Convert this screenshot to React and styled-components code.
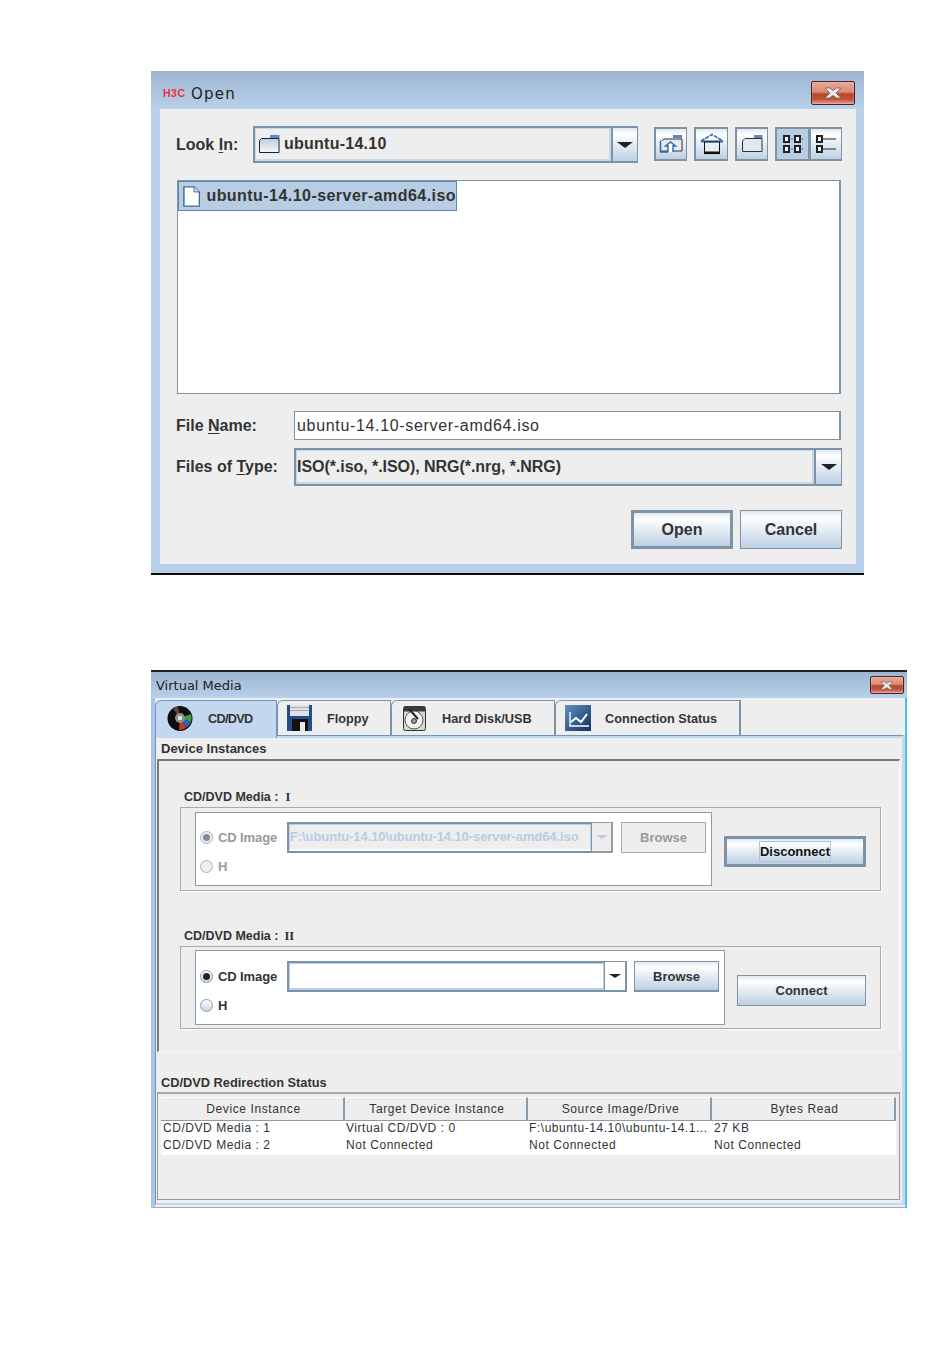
import React from "react";
import styled, { createGlobalStyle, css } from "styled-components";

const Global = createGlobalStyle`
  html, body { margin: 0; padding: 0; background: #fff; }
  * { box-sizing: border-box; }
  #root { font-family: "Liberation Sans", Arial, sans-serif; color: #333; }
`;

const metal = "linear-gradient(180deg,#dfe9f2 0,#ffffff 18%,#eef3f8 38%,#bdd0e4 100%)";

const Page = styled.div`
  width: 950px; height: 1346px; padding: 71px 0 0 151px; overflow: hidden;
`;

/* ---------- Open dialog ---------- */
const Dialog = styled.div`
  width: 713px; height: 504px; display: flex; flex-direction: column;
  background: #b8d0ea; border-bottom: 2px solid #0b0b0b;
`;
const DialogTitle = styled.div`
  height: 38px; flex: none; display: flex; align-items: center; padding: 6px 9px 0 12px;
  background: linear-gradient(180deg,#9db5d0,#b8d0ea);
`;
const Logo = styled.span`
  font: bold 10px/10px "Liberation Sans", sans-serif; color: #e8303c; letter-spacing: .5px; width: 28px;
  padding-top: 2px; transform: scaleX(1.05); transform-origin: left;
`;
const TitleText = styled.span`
  font: ${p => p.$size}px "DejaVu Sans", sans-serif; color: #222; letter-spacing: ${p => p.$track}px; flex: 1;
  padding-top: ${p => p.$pt || 0}px;
`;
const CloseBox = styled.div`
  width: ${p => p.$w}px; height: ${p => p.$h}px; display: flex; align-items: center; justify-content: center;
  border: 1px solid #4a1f28; border-radius: 2px;
  background: linear-gradient(180deg,#e8a898 0,#dd8c76 45%,#b8452a 55%,#c4553a 80%,#e2a595 100%);
  box-shadow: inset 0 0 0 1px rgba(255,255,255,.15);
`;
const DialogBody = styled.div`
  margin: 0 8px 9px 9px; flex: 1; background: #eee; padding: 17px 0 0 16px;
`;
const Row = styled.div`
  display: flex; align-items: center; height: ${p => p.$h}px; margin-top: ${p => p.$mt || 0}px;
`;
const BigLabel = styled.div`
  width: ${p => p.$w}px; flex: none; font: bold 16px "Liberation Sans", sans-serif; color: #333;
  u { text-underline-offset: 2px; }
`;
const Combo = styled.div`
  width: ${p => p.$w}px; height: 100%; display: flex; flex: none;
  border: 1px solid #7f93a7; border-top-width: 2px; border-bottom-width: 2px; border-left-width: 2px;
`;
const ComboValue = styled.div`
  flex: 1; display: flex; align-items: center; gap: 4px; padding-left: ${p => p.$pl}px;
  background: #eee; border: 1px solid #c6d8ea; border-width: 1px 2px 2px 1px;
  font: bold 16px "Liberation Sans", sans-serif; letter-spacing: ${p => p.$track}px; color: #333; white-space: nowrap;
`;
const ArrowBox = styled.div`
  width: ${p => p.$w}px; flex: none; display: flex; align-items: center; justify-content: center;
  border-left: 2px solid #7f93a7; background: ${metal};
`;
const Tri = styled.i`
  width: 0; height: 0; border-style: solid; border-width: ${p => p.$s || 6}px ${p => (p.$s || 6) + 2}px 0;
  border-color: ${p => p.$c || "#222"} transparent transparent;
`;
const Tools = styled.div`
  display: flex; margin: 0 0 2px 16px; height: 34px;
`;
const ToolBtn = styled.div`
  width: ${p => p.$w || 33}px; height: 34px; margin-left: ${p => p.$ml || 0}px; flex: none;
  display: flex; align-items: center; justify-content: center;
  border: 1px solid #7f93a7; border-width: 2px 1px 2px 2px;
  background: ${p => (p.$on ? "#b8cde3" : metal)};
`;
const FileList = styled.div`
  margin: 17px 0 0 1px; width: 664px; height: 214px; background: #fff;
  border: 1px solid #7f93a7; border-right-width: 2px;
`;
const Selected = styled.div`
  width: 279px; height: 30px; display: flex; align-items: center; gap: 6px; padding-left: 4px;
  background: #b8cde3; border: 1px solid #5f87b5;
  font: bold 16px "Liberation Sans", sans-serif; letter-spacing: .45px; color: #333; white-space: nowrap;
`;
const FileField = styled.div`
  width: 547px; height: 29px; background: #fff; display: flex; align-items: center; padding-left: 2px;
  border: 1px solid #7f93a7; border-width: 1px 2px 1px 1px;
  font: 16px "Liberation Sans", sans-serif; letter-spacing: .67px; color: #333; white-space: nowrap;
`;
const Actions = styled.div`
  display: flex; gap: 7px; justify-content: flex-end; width: 666px; margin-top: 24px;
`;
const ActionBtn = styled.div`
  width: 102px; height: 39px; display: flex; align-items: center; justify-content: center;
  font: bold 16px "Liberation Sans", sans-serif; color: #333; background: ${metal};
  border: ${p => (p.$def ? 3 : 1)}px solid #7f93a7;
`;

/* ---------- Virtual media window ---------- */
const VMWindow = styled.div`
  width: 756px; height: 538px; margin-top: 95px; display: flex; flex-direction: column;
  border-top: 2px solid #222;
`;
const VMTitle = styled.div`
  height: 26px; flex: none; display: flex; align-items: center; padding: 0 3px 0 5px;
  background: linear-gradient(180deg,#9db5d0,#b8d0ea);
`;
const VMBody = styled.div`
  flex: 1; display: flex; flex-direction: column; background: #eee; min-height: 0;
  border-left: 4px solid #a9c6ea; border-right: 2px solid #46c0ee; border-bottom: 1px solid #aaa;
`;
const TabStrip = styled.div`
  display: flex; height: 35px; margin-top: 2px; flex: none;
`;
const Tab = styled.div`
  width: ${p => p.$w}px; height: ${p => (p.$on ? 38 : 35)}px; flex: none; display: flex; align-items: center;
  position: relative; z-index: ${p => (p.$on ? 2 : 1)};
  padding-left: ${p => p.$pl}px; padding-bottom: ${p => (p.$on ? 3 : 0)}px;
  gap: ${p => p.$gap}px;
  background: ${p => (p.$on ? "#c3d8f0" : "#eee")};
  border: 1px solid #7f93a7; border-width: 1px 1px 0 1px; border-top-left-radius: 6px;
  border-right-width: ${p => (p.$last ? 2 : 1)}px;
  ${p => p.$on && css`border-color: #6f94c0;`}
  font: bold 12.7px "Liberation Sans", sans-serif; color: #333; white-space: nowrap;
`;
const TabName = styled.span`
  letter-spacing: ${p => p.$track || 0}px; padding-top: 2px;
`;
const Panel = styled.div`
  flex: 1; min-height: 0; margin-bottom: 2px; display: flex; flex-direction: column;
  border: 1px solid #6f94c0; border-width: 1px 3px 0 1px; border-right-color: #c9d9ec;
  border-bottom: 2px solid #c3d8f0;
  border-top: 1px solid #6f94c0; box-shadow: inset 0 2px 0 #c3d8f0;
`;
const Heading = styled.div`
  height: ${p => p.$h}px; flex: none; display: flex; align-items: flex-end; padding: 0 0 ${p => p.$pb}px 5px;
  font: bold ${p => p.$size}px "Liberation Sans", sans-serif; color: #333; white-space: nowrap;
`;
const Group = styled.div`
  margin-left: 1px; width: 743px; height: 293px; flex: none; padding: 28px 0 0 21px;
  border-top: 2px solid #777; border-left: 2px solid #777; border-right: 1px solid #fff; border-bottom: 1px solid #f6f6f6;
`;
const SectionTitle = styled.div`
  height: 16px; margin: ${p => p.$mt || 0}px 0 2px 4px; display: flex; align-items: center; gap: 6px;
  font: bold 12.5px "Liberation Sans", sans-serif; color: #333; white-space: nowrap;
`;
const Roman = styled.span`
  font: bold 12.5px "Liberation Serif", serif; margin-left: ${p => p.$ml}px;
`;
const Outer = styled.div`
  width: 701px; height: ${p => p.$h}px; display: flex; align-items: flex-start; padding: ${p => p.$pt}px 0 0 14px;
  border: 1px solid #aaa; box-shadow: 1px 1px 0 #fff;
`;
const Inner = styled.div`
  width: ${p => p.$w}px; height: ${p => p.$h}px; background: #fff; flex: none; padding: ${p => p.$pt}px 0 0 4px;
  border: 1px solid #8a9bac;
`;
const RadioRow = styled.div`
  display: flex; align-items: center; height: ${p => p.$h}px; margin-top: ${p => p.$mt || 0}px;
`;
const Radio = styled.span`
  width: 13px; height: 13px; border-radius: 50%; flex: none; display: flex; align-items: center; justify-content: center;
  border: 1px solid ${p => (p.$off ? "#aab2ba" : "#8a9bb0")};
  background: ${p => (p.$off ? "#eee" : "linear-gradient(180deg,#fff,#c6d6e8)")};
  &::after {
    content: ""; width: 7px; height: 7px; border-radius: 50%;
    background: ${p => (!p.$sel ? "transparent" : p.$off ? "#7a8ca5" : "#222")};
  }
`;
const RadioLabel = styled.span`
  width: ${p => p.$w}px; flex: none; padding-left: 5px; letter-spacing: -.1px;
  font: bold 13px "Liberation Sans", sans-serif; color: ${p => (p.$off ? "#999" : "#333")}; white-space: nowrap;
`;
const MiniCombo = styled.div`
  width: ${p => p.$w}px; height: 31px; flex: none; display: flex;
  border: 2px solid #7f93a7; border-right-width: 1px; border-bottom-width: 2px;
  background: ${p => (p.$off ? "#eee" : "#fff")};
`;
const MiniValue = styled.div`
  flex: 1; min-width: 0; display: flex; align-items: center; padding: 0 0 1px 0; overflow: hidden;
  border: 1px solid #b8d0ea; border-width: 1px 1px 2px 1px; border-bottom-color: ${p => (p.$off ? "#fff" : "#b8d0ea")};
  font: bold 13px "Liberation Sans", sans-serif; letter-spacing: -.09px; color: #b8cde3; white-space: nowrap;
`;
const MiniArrow = styled.div`
  width: ${p => p.$w}px; height: 31px; flex: none; display: flex; align-items: center; justify-content: center;
  border: 2px solid #7f93a7; border-width: 1px 2px 2px 0; background: ${p => (p.$off ? "#eee" : "#fff")};
  ${p => p.$off && "border-color:#999;"}
`;
const SmallBtn = styled.div`
  width: ${p => p.$w}px; height: 31px; margin-left: ${p => p.$ml}px; flex: none; display: flex; align-items: center; justify-content: center;
  font: bold 13px "Liberation Sans", sans-serif; color: ${p => (p.$off ? "#999" : "#333")};
  border: 1px solid ${p => (p.$off ? "#aaa" : "#7f93a7")};
  border-bottom-width: ${p => (p.$off ? 1 : 2)}px;
  background: ${p => (p.$off ? "#eee" : metal)};
`;
const SideBtn = styled.div`
  width: ${p => p.$w}px; height: 31px; margin: ${p => p.$mt}px 0 0 12px; flex: none; display: flex; align-items: center; justify-content: center;
  font: bold 13px "Liberation Sans", sans-serif; color: ${p => (p.$focus ? "#111" : "#333")};
  border: ${p => (p.$focus ? 3 : 1)}px solid #7f93a7; background: ${metal};
`;
const Focus = styled.span`
  display: inline-flex; align-items: center; height: 21px; border: 1px solid #b3c4d6;
`;
const TableBox = styled.div`
  margin-left: 1px; width: 743px; height: 108px; flex: none; padding: 3px 0 0 3px;
  border: 1px solid #999; border-top: 2px solid #aaa;
`;
const Cols = styled.div`
  display: grid; grid-template-columns: 184px 183px 184px 184px; width: 735px;
`;
const HeadCell = styled.div`
  height: 24px; display: flex; align-items: center; justify-content: center; padding: 0 0 1px 3px;
  font: 12px "Liberation Sans", sans-serif; letter-spacing: ${p => p.$track}px; color: #333;
  background: #eee; border-top: 1px solid #fff; border-bottom: 1px solid #8a9bac; border-right: 2px solid #8a9bac;
`;
const Rows = styled(Cols)`
  grid-template-columns: 183px 183px 185px 184px; background: #fff; grid-auto-rows: 17px;
`;
const Cell = styled.div`
  padding-left: 2px; font: 12px/15px "Liberation Sans", sans-serif;
  letter-spacing: .55px; color: #333; white-space: nowrap; overflow: hidden;
`;
const TabIcon = styled.svg`
  flex: none; display: block;
`;

/* ---------- icons ---------- */
const CloseX = ({ s = 1 }) => (
  <svg width={18 * s} height={12 * s} viewBox="0 0 18 12">
    <path d="M1 1h4.500L9 3.500 12.500 1H17l-5 5 5 5h-4.500L9 8.500 5.500 11H1l5-5z" fill="#ececec" stroke="#6a5a58" strokeWidth=".8" />
  </svg>
);
const FolderIcon = () => (
  <svg width="22" height="20" viewBox="0 0 22 20">
    <defs><linearGradient id="fg" x1="0" y1="0" x2="0" y2="1"><stop offset="0" stopColor="#b8cde3" /><stop offset="1" stopColor="#f6f9fb" /></linearGradient></defs>
    <rect x="12" y="1" width="9.500" height="3" fill="#5f87c0" />
    <path d="M1.500 6.500 L3.500 4.500 H21 V18.500 H1.500Z" fill="url(#fg)" stroke="#222" />
  </svg>
);
const DocIcon = () => (
  <svg width="19" height="23" viewBox="0 0 19 23">
    <path d="M1 1H12L18 7V22H1Z" fill="#fff" stroke="#3e6b9c" strokeWidth="1.6" />
    <path d="M12 1V6.500H18" fill="#cfdcea" stroke="#3e6b9c" />
  </svg>
);
const UpIcon = () => (
  <svg width="24" height="20" viewBox="0 0 24 20">
    <rect x="14" y="1" width="9" height="3" fill="#5f87c0" />
    <path d="M3 7 L5 5 H23 V17 H1.500" fill="#e4ebf2" stroke="#333" />
    <path d="M1.500 6.500V18H9" fill="none" stroke="#2f66a8" strokeWidth="1.500" />
    <path d="M9 18V12H6.500L11.500 8 16.500 12H14V18" fill="#fff" stroke="#2f66a8" strokeWidth="1.400" />
  </svg>
);
const HomeIcon = () => (
  <svg width="24" height="22" viewBox="0 0 24 22">
    <path d="M1 8 12 1.500 23 8" fill="none" stroke="#2f66a8" strokeWidth="1.600" strokeDasharray="4 1" />
    <rect x="1" y="7.500" width="22" height="2" fill="#2f66a8" />
    <rect x="4.500" y="9" width="15" height="11" fill="#e8eef4" stroke="#111" strokeWidth="1" />
    <rect x="4" y="18.500" width="16" height="2.600" fill="#111" />
  </svg>
);
const NewFolderIcon = () => (
  <svg width="22" height="20" viewBox="0 0 22 20">
    <rect x="13" y="1" width="8.500" height="3" fill="#5f87c0" />
    <path d="M1.500 7 L4 4.500 H21 V17.500 H1.500Z" fill="#e0e7ef" stroke="#333" />
  </svg>
);
const GridIcon = () => (
  <svg width="22" height="20" viewBox="0 0 22 20" fill="#f4f6f8" stroke="#222" strokeWidth="2">
    <rect x="2" y="2" width="5" height="6" /><rect x="13" y="2" width="5" height="6" />
    <rect x="2" y="12" width="5" height="6" /><rect x="13" y="12" width="5" height="6" />
    <path d="M9.500 5h1M20 5h1M9.500 15h1M20 15h1" strokeWidth="1" />
  </svg>
);
const DetailIcon = () => (
  <svg width="22" height="20" viewBox="0 0 22 20" fill="#f4f6f8" stroke="#222" strokeWidth="2">
    <rect x="2" y="2" width="5" height="6" /><rect x="2" y="12" width="5" height="6" />
    <path d="M8 5h13M8 15h13" strokeWidth="1" />
  </svg>
);
const DiscIcon = () => (
  <TabIcon width="26" height="26" viewBox="0 0 26 26">
    <circle cx="13" cy="13.500" r="12.500" fill="#0e0e0e" />
    <path d="M13 13 L24 9 A12 12 0 0 1 24 17Z" fill="#3f9a4a" />
    <path d="M13 13 L24 17 A12 12 0 0 1 19 23Z" fill="#3a5fb0" />
    <path d="M13 13 L19 23 A12 12 0 0 1 12 25Z" fill="#b8402a" />
    <path d="M13 13 L11 1.500 A12 12 0 0 0 6 3.500Z" fill="#5a4a30" />
    <circle cx="13" cy="13" r="5" fill="#8f8f8a" />
    <circle cx="13" cy="13" r="2.200" fill="#e6e6e0" />
  </TabIcon>
);
const FloppyIcon = () => (
  <TabIcon width="25" height="26" viewBox="0 0 25 26">
    <rect width="25" height="26" fill="#234f86" />
    <rect x="3" y="0" width="19" height="11" fill="#dfe3e8" />
    <rect x="3" y="2" width="19" height="1" fill="#aab" />
    <rect x="3" y="5" width="19" height="1" fill="#aab" />
    <rect x="5" y="14" width="16" height="12" fill="#111" />
    <rect x="13" y="17" width="5" height="9" fill="#e8e8e8" />
  </TabIcon>
);
const HddIcon = () => (
  <TabIcon width="23" height="26" viewBox="0 0 23 26">
    <rect x=".5" y="1.500" width="22" height="24" rx="2" fill="#d8d8d4" stroke="#333" />
    <path d="M1 1.500h21v5H1z" fill="#3a3a38" />
    <circle cx="11" cy="15" r="9" fill="#f2f2ee" stroke="#555" />
    <circle cx="11" cy="16" r="2.500" fill="#999" stroke="#333" />
    <path d="M6 4 15 14" stroke="#222" strokeWidth="2" />
  </TabIcon>
);
const ChartIcon = () => (
  <TabIcon width="26" height="26" viewBox="0 0 26 26">
    <defs><linearGradient id="cg" x1="0" y1="0" x2="1" y2="1"><stop offset="0" stopColor="#5f93c6" /><stop offset="1" stopColor="#10305a" /></linearGradient></defs>
    <rect width="26" height="26" fill="url(#cg)" />
    <path d="M5 7V21H24" fill="none" stroke="#fff" strokeWidth="1.400" />
    <path d="M6 17 11 13 16 17 22 9" fill="none" stroke="#fff" strokeWidth="2" />
  </TabIcon>
);

const Media = ({ title, roman, gap, mt, outerH, outerPt, innerW, innerH, innerPt, off, comboW, arrowW, btnMl, sideW, sideMt, side, focus }) => (
  <>
    <SectionTitle $mt={mt}>{title}<Roman $ml={gap}>{roman}</Roman></SectionTitle>
    <Outer $h={outerH} $pt={outerPt}>
      <Inner $w={innerW} $h={innerH} $pt={innerPt}>
        <RadioRow $h={31}>
          <Radio $sel $off={off} />
          <RadioLabel $w={74} $off={off}>CD Image</RadioLabel>
          <MiniCombo $w={comboW} $off={off}>
            <MiniValue $off={off}>{off ? "F:\\ubuntu-14.10\\ubuntu-14.10-server-amd64.iso" : ""}</MiniValue>
          </MiniCombo>
          <MiniArrow $w={arrowW} $off={off}><Tri $s={4} $c={off ? "#b8cde3" : "#222"} /></MiniArrow>
          <SmallBtn $w={85} $ml={btnMl} $off={off}>Browse</SmallBtn>
        </RadioRow>
        <RadioRow $h={16} $mt={5}>
          <Radio $off={off} />
          <RadioLabel $w={30} $off={off}>H</RadioLabel>
        </RadioRow>
      </Inner>
      <SideBtn $w={sideW} $mt={sideMt} $focus={focus}>{focus ? <Focus>{side}</Focus> : side}</SideBtn>
    </Outer>
  </>
);

export default function App() {
  return (
    <Page>
      <Global />
      <Dialog>
        <DialogTitle>
          <Logo>H3C</Logo>
          <TitleText $size={15} $track={1.2} $pt={2}>Open</TitleText>
          <CloseBox $w={44} $h={24}><CloseX /></CloseBox>
        </DialogTitle>
        <DialogBody>
          <Row $h={37}>
            <BigLabel $w={77}>Look <u>I</u>n:</BigLabel>
            <Combo $w={385}>
              <ComboValue $pl={2} $track={.25}><FolderIcon />ubuntu-14.10</ComboValue>
              <ArrowBox $w={26}><Tri /></ArrowBox>
            </Combo>
            <Tools>
              <ToolBtn><UpIcon /></ToolBtn>
              <ToolBtn $w={34} $ml={7}><HomeIcon /></ToolBtn>
              <ToolBtn $ml={7}><NewFolderIcon /></ToolBtn>
              <ToolBtn $w={34} $ml={7} $on><GridIcon /></ToolBtn>
              <ToolBtn $w={33}><DetailIcon /></ToolBtn>
            </Tools>
          </Row>
          <FileList>
            <Selected><DocIcon />ubuntu-14.10-server-amd64.iso</Selected>
          </FileList>
          <Row $h={29} $mt={17}>
            <BigLabel $w={118}>File <u>N</u>ame:</BigLabel>
            <FileField>ubuntu-14.10-server-amd64.iso</FileField>
          </Row>
          <Row $h={38} $mt={8}>
            <BigLabel $w={118}>Files of <u>T</u>ype:</BigLabel>
            <Combo $w={548}>
              <ComboValue $pl={0} $track={-.05}>ISO(*.iso, *.ISO), NRG(*.nrg, *.NRG)</ComboValue>
              <ArrowBox $w={27}><Tri /></ArrowBox>
            </Combo>
          </Row>
          <Actions>
            <ActionBtn $def>Open</ActionBtn>
            <ActionBtn>Cancel</ActionBtn>
          </Actions>
        </DialogBody>
      </Dialog>

      <VMWindow>
        <VMTitle>
          <TitleText $size={13} $track={0}>Virtual Media</TitleText>
          <CloseBox $w={34} $h={18}><CloseX s={0.75} /></CloseBox>
        </VMTitle>
        <VMBody>
          <TabStrip>
            <Tab $w={122} $pl={11} $gap={15} $on><DiscIcon /><TabName $track={-.7}>CD/DVD</TabName></Tab>
            <Tab $w={114} $pl={9} $gap={15}><FloppyIcon /><TabName>Floppy</TabName></Tab>
            <Tab $w={164} $pl={11} $gap={16}><HddIcon /><TabName>Hard Disk/USB</TabName></Tab>
            <Tab $w={186} $pl={9} $gap={14} $last><ChartIcon /><TabName>Connection Status</TabName></Tab>
          </TabStrip>
          <Panel>
            <Heading $h={23} $pb={3} $size={13}>Device Instances</Heading>
            <Group>
              <Media title="CD/DVD Media :" roman="I" gap={1} outerH={84} outerPt={4} innerW={517} innerH={74} innerPt={9}
                off comboW={305} arrowW={21} btnMl={8} sideW={142} sideMt={24} side="Disconnect" focus />
              <Media title="CD/DVD Media :" roman="II" gap={0} mt={37} outerH={83} outerPt={3} innerW={530} innerH={75} innerPt={10}
                comboW={318} arrowW={22} btnMl={7} sideW={129} sideMt={25} side="Connect" />
            </Group>
            <Heading $h={40} $pb={2} $size={12.8}>CD/DVD Redirection Status</Heading>
            <TableBox>
              <Cols>
                <HeadCell $track={0.6}>Device Instance</HeadCell>
                <HeadCell $track={0.6}>Target Device Instance</HeadCell>
                <HeadCell $track={0.65}>Source Image/Drive</HeadCell>
                <HeadCell $track={0.6}>Bytes Read</HeadCell>
              </Cols>
              <Rows>
                <Cell>CD/DVD Media :  1</Cell><Cell>Virtual CD/DVD : 0</Cell><Cell>F:\ubuntu-14.10\ubuntu-14.1...</Cell><Cell>27 KB</Cell>
                <Cell>CD/DVD Media :  2</Cell><Cell>Not Connected</Cell><Cell>Not Connected</Cell><Cell>Not Connected</Cell>
              </Rows>
            </TableBox>
          </Panel>
        </VMBody>
      </VMWindow>
    </Page>
  );
}
